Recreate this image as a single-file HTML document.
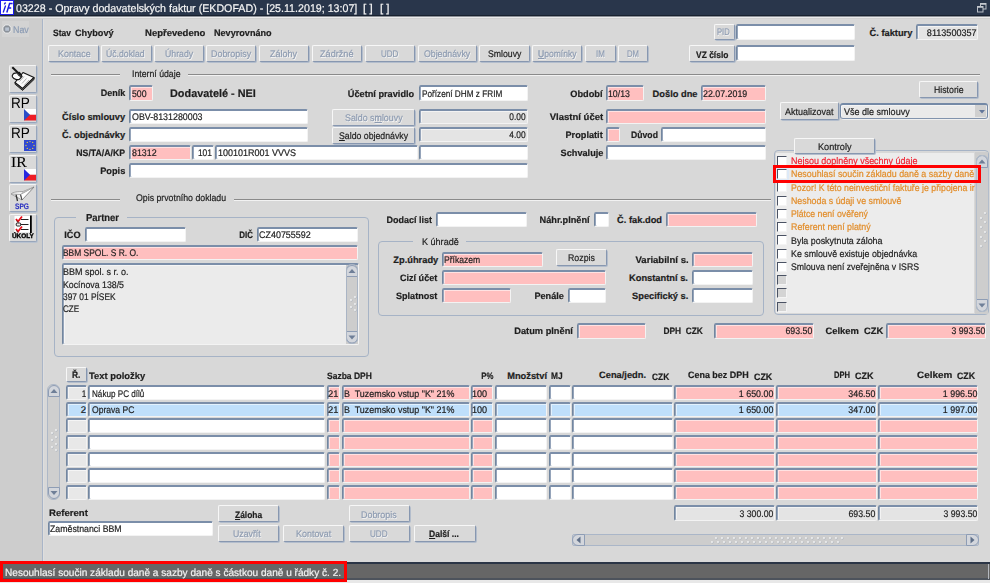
<!DOCTYPE html><html><head><meta charset="utf-8"><style>
*{margin:0;padding:0}
html,body{width:990px;height:583px;overflow:hidden;background:#d8d8d8}
body{position:relative;font-family:"Liberation Sans",sans-serif;color:#1e1e1e;text-rendering:geometricPrecision}
body>div,body>svg{position:absolute}
.t{white-space:nowrap;line-height:14px;height:14px;transform-origin:0 0;-webkit-text-stroke:0.2px currentColor}
.fld{box-sizing:border-box;border-top:2px solid #7b8ea9;border-left:1px solid #72869f;border-right:1px solid #f3f3f3;border-bottom:1px solid #f3f3f3;border-radius:2px;box-shadow:inset 1px 0 0 #95a4ba,inset 2px 1px 0 rgba(255,255,255,0.55)}
.btn{box-sizing:border-box;background:#d9d9d9;border-top:1px solid #f7f7f7;border-left:1px solid #f7f7f7;border-right:1px solid #8797b0;border-bottom:1px solid #8797b0;box-shadow:1px 1px 0 #b3bdcc;border-radius:2px}
.sep{height:1px;background:#8a8a8a;border-bottom:1px solid #f2f2f2}
.grp{box-sizing:border-box;border:1px solid #a6b3c6;border-radius:4px}
.cb{width:10px;height:10px;box-sizing:border-box;border-top:1.5px solid #4a5263;border-left:1.5px solid #4a5263;border-right:1px solid #f4f4f4;border-bottom:1px solid #f4f4f4}
.ibtn{width:28px;height:28px;box-sizing:border-box;background:#d9d9d9;border-top:1px solid #f4f4f4;border-left:1px solid #f4f4f4;border-right:1px solid #98a6bb;border-bottom:1px solid #98a6bb;box-shadow:1px 1px 0 #b8c2d0;border-radius:2px}
u{text-decoration:underline}
.dis{text-shadow:0.7px 0.7px 0 rgba(255,255,255,0.75)}
</style></head><body>
<div style="left:0px;top:0px;width:990px;height:15px;background:#29364b"></div>
<div style="left:0px;top:15px;width:990px;height:1px;background:#18212f"></div>
<div style="left:0px;top:16px;width:990px;height:1px;background:#8c9097"></div>
<div style="left:0px;top:17px;width:990px;height:1px;background:#ebebeb"></div>
<div style="left:0px;top:18px;width:990px;height:1px;background:#d0d0d0"></div>
<div style="left:0px;top:19px;width:42px;height:543px;background:#cdcdcd"></div>
<div style="left:42px;top:19px;width:1px;height:543px;background:#a9b5c8"></div>
<div style="left:43px;top:19px;width:1px;height:543px;background:#dedede"></div>
<div style="left:44px;top:19px;width:946px;height:543px;background:#d8d8d8"></div>
<div style="left:0px;top:0px;width:14px;height:15px;background:#fff;border:1px solid #1c1cf0;box-sizing:border-box"></div>
<svg style="left:1px;top:1px" width="12" height="13" viewBox="0 0 12 13"><path d="M4.6 1.5 L3.2 3.3" stroke="#1a1ae0" stroke-width="1.3"/><path d="M4.6 4.5 L2.2 11.5" stroke="#1a1ae0" stroke-width="1.3"/><path d="M5.8 11.5 L8.6 2.6 L11.6 2.6 M7.2 7 L10.2 7" stroke="#1a1ae0" stroke-width="1.5" fill="none"/></svg>
<div class="t" style="top:2.00px;font-size:11.2px;color:#f4f4f4;left:15.60px;transform:scaleX(0.9535);">03228 - Opravy dodavatelských faktur (EKDOFAD) - [25.11.2019; 13:07]</div>
<div class="t" style="top:2.00px;font-size:11.2px;color:#f4f4f4;left:363.30px;transform:scaleX(1.0444);">[ ]</div>
<div class="t" style="top:2.00px;font-size:11.2px;color:#f4f4f4;left:379.70px;transform:scaleX(1.0222);">[ ]</div>
<svg style="left:977px;top:3px" width="10" height="10" viewBox="0 0 10 10"><rect x="3.5" y="0.5" width="5.5" height="5.5" fill="none" stroke="#b9bec6" stroke-width="1"/><path d="M3.5 1 L9 1" stroke="#c8ccd2" stroke-width="1.5"/><rect x="0.5" y="3.5" width="5.5" height="5.5" fill="#29364b" stroke="#b9bec6" stroke-width="1"/><path d="M0.5 4 L6 4" stroke="#c8ccd2" stroke-width="1.5"/></svg>
<div style="left:0px;top:562px;width:990px;height:2px;background:#2b3546"></div>
<div style="left:0px;top:564px;width:990px;height:14px;background:#666666"></div>
<div style="left:0px;top:578px;width:990px;height:2px;background:#4d535c"></div>
<div style="left:988px;top:564px;width:1px;height:15px;background:#b4b8be"></div>
<div style="left:0px;top:580px;width:990px;height:3px;background:#e8e8e8"></div>
<div class="t" style="top:567.00px;font-size:10.4px;color:#f2f2f2;left:4.83px;transform:scaleX(0.9696);">Nesouhlasí součin základu daně a sazby daně s částkou daně u řádky č. 2.</div>
<div style="left:0px;top:561px;width:347px;height:21px;border:3px solid #ff0000;box-sizing:border-box"></div>
<div style="left:2px;top:21px;width:27px;height:16px;background:#d3d3d3"></div>
<svg style="left:2px;top:24px" width="10" height="10" viewBox="0 0 10 10"><circle cx="5" cy="5" r="4.2" fill="#8a9098" stroke="#eeeeee" stroke-width="1"/><rect x="3.2" y="3.4" width="3.8" height="3.4" fill="#b8c2d0"/></svg>
<div class="t" style="top:24.00px;font-size:9.8px;color:#8b9bb3;left:13.40px;transform:scaleX(0.9059);">Nav</div>
<div class="t" style="top:26.00px;font-size:9.3px;font-weight:bold;left:52.50px;transform:scaleX(0.9100);">Stav</div>
<div class="t" style="top:26.00px;font-size:9.3px;font-weight:bold;left:74.70px;transform:scaleX(0.9821);">Chybový</div>
<div class="t" style="top:26.00px;font-size:9.3px;font-weight:bold;left:144.50px;transform:scaleX(1.0254);">Nepřevedeno</div>
<div class="t" style="top:26.00px;font-size:9.3px;font-weight:bold;left:213.60px;transform:scaleX(0.9780);">Nevyrovnáno</div>
<div class="btn" style="left:48px;top:45px;width:51px;height:17px"></div>
<div class="t dis" style="top:48.00px;font-size:9.6px;color:#8d9bb1;left:57.70px;transform:scaleX(0.9286);">Kontace</div>
<div class="btn" style="left:101px;top:45px;width:51px;height:17px"></div>
<div class="t dis" style="top:48.00px;font-size:9.6px;color:#8d9bb1;left:106.20px;transform:scaleX(0.9048);">Úč.doklad</div>
<div class="btn" style="left:154px;top:45px;width:50px;height:17px"></div>
<div class="t dis" style="top:48.00px;font-size:9.6px;color:#8d9bb1;left:164.50px;transform:scaleX(0.9097);">Úhrady</div>
<div class="btn" style="left:206px;top:45px;width:50px;height:17px"></div>
<div class="t dis" style="top:48.00px;font-size:9.6px;color:#8d9bb1;left:210.50px;transform:scaleX(0.9279);">Dobropisy</div>
<div class="btn" style="left:259px;top:45px;width:50px;height:17px"></div>
<div class="t dis" style="top:48.00px;font-size:9.6px;color:#8d9bb1;left:270.00px;transform:scaleX(0.9414);">Zálohy</div>
<div class="btn" style="left:312px;top:45px;width:50px;height:17px"></div>
<div class="t dis" style="top:48.00px;font-size:9.6px;color:#8d9bb1;left:320.30px;transform:scaleX(0.9514);">Zádržné</div>
<div class="btn" style="left:365px;top:45px;width:50px;height:17px"></div>
<div class="t dis" style="top:48.00px;font-size:9.6px;color:#8d9bb1;left:381.40px;transform:scaleX(0.8381);">UDD</div>
<div class="btn" style="left:418px;top:45px;width:59px;height:17px"></div>
<div class="t dis" style="top:48.00px;font-size:9.6px;color:#8d9bb1;left:423.80px;transform:scaleX(0.9118);">Objednávky</div>
<div class="btn" style="left:479px;top:45px;width:51px;height:17px"></div>
<div class="t" style="top:48.00px;font-size:9.6px;left:487.70px;transform:scaleX(0.9081);">Smlouvy</div>
<div class="btn" style="left:532px;top:45px;width:50px;height:17px"></div>
<div class="t dis" style="top:48.00px;font-size:9.6px;color:#8d9bb1;left:537.60px;transform:scaleX(0.8930);"><u>U</u>pomínky</div>
<div class="btn" style="left:585px;top:45px;width:31px;height:17px"></div>
<div class="t dis" style="top:48.00px;font-size:9.6px;color:#8d9bb1;left:595.87px;transform:scaleX(0.8333);">IM</div>
<div class="btn" style="left:618px;top:45px;width:30px;height:17px"></div>
<div class="t dis" style="top:48.00px;font-size:9.6px;color:#8d9bb1;left:626.50px;transform:scaleX(0.8067);">DM</div>
<div class="btn" style="left:714px;top:24px;width:21px;height:16px"></div>
<div class="t dis" style="top:26.00px;font-size:9.6px;color:#8d9bb1;left:717.30px;transform:scaleX(0.7937);">PID</div>
<div class="fld" style="left:736px;top:24px;width:119px;height:16px;background:#fff"></div>
<div class="btn" style="left:689px;top:45px;width:46px;height:17px"></div>
<div class="t" style="top:48.00px;font-size:9.3px;font-weight:bold;left:695.50px;transform:scaleX(0.9083);">VZ číslo</div>
<div class="fld" style="left:736px;top:45px;width:119px;height:16px;background:#fff"></div>
<div class="t" style="top:26.00px;font-size:9.3px;font-weight:bold;left:869.50px;width:42.89px;text-align:right;">Č. faktury</div>
<div class="fld" style="left:916px;top:24px;width:62px;height:16px;background:#e4e4e4"></div>
<div class="t" style="top:27.00px;font-size:9.6px;left:924.16px;width:52.66px;text-align:right;transform:scaleX(0.9462);transform-origin:100% 0;">8113500357</div>
<div class="sep" style="left:51px;top:74px;width:69px"></div>
<div class="t" style="top:68.00px;font-size:9.6px;left:132.09px;transform:scaleX(0.9096);">Interní údaje</div>
<div class="sep" style="left:188px;top:74px;width:792px"></div>
<div class="t" style="top:86.00px;font-size:9.3px;font-weight:bold;left:99.52px;width:25.33px;text-align:right;transform:scaleX(0.9692);transform-origin:100% 0;">Deník</div>
<div class="fld" style="left:129px;top:85px;width:24px;height:16px;background:#ffbfbf"></div>
<div class="t" style="top:88.00px;font-size:9.6px;left:131.60px;transform:scaleX(0.9125);">500</div>
<div class="t" style="top:87.00px;font-size:11px;font-weight:bold;left:169.50px;transform:scaleX(0.9884);">Dodavatelé - NEI</div>
<div class="t" style="top:87.00px;font-size:9.3px;font-weight:bold;left:347.40px;width:67.17px;text-align:right;transform:scaleX(0.9881);transform-origin:100% 0;">Účetní pravidlo</div>
<div class="fld" style="left:419px;top:85px;width:109px;height:16px;background:#fff"></div>
<div class="t" style="top:88.00px;font-size:9.6px;left:421.70px;transform:scaleX(0.8559);">Pořízení DHM z FRIM</div>
<div class="t" style="top:87.00px;font-size:9.3px;font-weight:bold;left:570.00px;width:32.53px;text-align:right;transform:scaleX(0.9909);transform-origin:100% 0;">Období</div>
<div class="fld" style="left:606px;top:85px;width:38px;height:16px;background:#ffbfbf"></div>
<div class="t" style="top:88.00px;font-size:9.6px;left:607.59px;transform:scaleX(0.9130);">10/13</div>
<div class="t" style="top:87.00px;font-size:9.3px;font-weight:bold;left:652.60px;width:44.94px;text-align:right;">Došlo dne</div>
<div class="fld" style="left:701px;top:85px;width:65px;height:16px;background:#ffbfbf"></div>
<div class="t" style="top:88.00px;font-size:9.6px;left:702.70px;transform:scaleX(0.9208);">22.07.2019</div>
<div class="btn" style="left:919px;top:81px;width:59px;height:17px"></div>
<div class="t" style="top:84.00px;font-size:9.6px;left:933.80px;transform:scaleX(0.9094);">Historie</div>
<div class="t" style="top:110.00px;font-size:9.3px;font-weight:bold;left:62.10px;width:63.03px;text-align:right;">Číslo smlouvy</div>
<div class="fld" style="left:129px;top:109px;width:179px;height:15px;background:#fff"></div>
<div class="t" style="top:111.00px;font-size:9.6px;left:131.60px;transform:scaleX(0.9250);">OBV-8131280003</div>
<div class="btn" style="left:332px;top:109px;width:83px;height:17px"></div>
<div class="t dis" style="top:112.00px;font-size:9.6px;color:#8d9bb1;left:344.50px;transform:scaleX(0.9226);">Saldo s<u>m</u>louvy</div>
<div class="fld" style="left:419px;top:109px;width:109px;height:15px;background:#e4e4e4"></div>
<div class="t" style="top:111.00px;font-size:9.6px;left:506.94px;width:18.69px;text-align:right;transform:scaleX(0.8737);transform-origin:100% 0;">0.00</div>
<div class="t" style="top:110.00px;font-size:9.3px;font-weight:bold;left:551.00px;width:52.19px;text-align:right;transform:scaleX(1.0250);transform-origin:100% 0;">Vlastní účet</div>
<div class="fld" style="left:606px;top:109px;width:160px;height:15px;background:#ffbfbf"></div>
<div class="btn" style="left:780px;top:102px;width:59px;height:18px"></div>
<div class="t" style="top:106.00px;font-size:9.6px;left:785.10px;transform:scaleX(0.9365);">Aktualizovat</div>
<div style="left:840px;top:102.5px;width:148px;height:16px;background:#eaeaea;border:1px solid #7489a6;border-top-width:2px;border-bottom-color:#8193ad;border-radius:3px;box-sizing:border-box;box-shadow:inset 1px 1px 0 #f4f4f4,1px 1px 0 #f0f0f0"></div>
<div class="t" style="top:106.00px;font-size:9.6px;left:843.80px;transform:scaleX(0.9400);">Vše dle smlouvy</div>
<div style="left:975px;top:104.5px;width:11px;height:12.5px;background:#d0d0d0"></div>
<svg style="left:978.5px;top:109.5px" width="6" height="4" viewBox="0 0 6 4"><path d="M0 0 L6 0 L3 3.5 Z" fill="#62769a"/></svg>
<div class="t" style="top:128.00px;font-size:9.3px;font-weight:bold;left:62.10px;width:63.03px;text-align:right;">Č. objednávky</div>
<div class="fld" style="left:129px;top:127px;width:179px;height:15px;background:#fff"></div>
<div class="btn" style="left:332px;top:127px;width:83px;height:17px"></div>
<div class="t" style="top:130.00px;font-size:9.6px;left:338.50px;transform:scaleX(0.9118);"><u>S</u>aldo objednávky</div>
<div class="fld" style="left:419px;top:127px;width:109px;height:15px;background:#e4e4e4"></div>
<div class="t" style="top:129.00px;font-size:9.6px;left:506.94px;width:18.69px;text-align:right;transform:scaleX(0.8737);transform-origin:100% 0;">4.00</div>
<div class="t" style="top:128.00px;font-size:9.3px;font-weight:bold;left:565.00px;width:37.72px;text-align:right;transform:scaleX(0.9868);transform-origin:100% 0;">Proplatit</div>
<div class="fld" style="left:606px;top:127px;width:14px;height:15px;background:#ffbfbf"></div>
<div class="t" style="top:128.00px;font-size:9.3px;font-weight:bold;left:629.01px;width:28.92px;text-align:right;transform:scaleX(0.9310);transform-origin:100% 0;">Důvod</div>
<div class="fld" style="left:661px;top:127px;width:105px;height:15px;background:#fff"></div>
<div class="t" style="top:146.00px;font-size:9.3px;font-weight:bold;left:73.10px;width:52.00px;text-align:right;transform:scaleX(0.9365);transform-origin:100% 0;">NS/TA/A/KP</div>
<div class="fld" style="left:129px;top:145px;width:62px;height:15px;background:#ffbfbf"></div>
<div class="t" style="top:147.00px;font-size:9.6px;left:131.70px;transform:scaleX(0.9231);">81312</div>
<div class="fld" style="left:192px;top:145px;width:22px;height:15px;background:#fff"></div>
<div class="t" style="top:147.00px;font-size:9.6px;left:195.90px;width:16.02px;text-align:right;transform:scaleX(0.8800);transform-origin:100% 0;">101</div>
<div class="fld" style="left:215px;top:145px;width:203px;height:15px;background:#fff"></div>
<div class="t" style="top:147.00px;font-size:9.6px;left:217.96px;transform:scaleX(0.9366);">100101R001 VVVS</div>
<div class="fld" style="left:419px;top:145px;width:109px;height:15px;background:#fff"></div>
<div class="t" style="top:146.00px;font-size:9.3px;font-weight:bold;left:559.99px;width:43.42px;text-align:right;transform:scaleX(0.9860);transform-origin:100% 0;">Schvaluje</div>
<div class="fld" style="left:606px;top:145px;width:160px;height:15px;background:#fff"></div>
<div class="t" style="top:164.00px;font-size:9.3px;font-weight:bold;left:100.30px;width:25.31px;text-align:right;transform:scaleX(0.9920);transform-origin:100% 0;">Popis</div>
<div class="fld" style="left:129px;top:163px;width:399px;height:15px;background:#fff"></div>
<div class="grp" style="left:774px;top:150px;width:215px;height:165px"></div>
<div style="left:775.5px;top:153px;width:198.5px;height:160px;background:#ececec"></div>
<div style="left:975px;top:152px;width:13px;height:162px;background:#cdcdcd"></div>
<div class="btn" style="left:794px;top:138px;width:81px;height:16px"></div>
<div class="t" style="top:141.00px;font-size:9.6px;left:817.80px;transform:scaleX(0.9514);">Kontroly</div>
<div class="cb" style="left:777px;top:155.80px;background:#ffffff"></div>
<div class="t" style="top:155.00px;font-size:9.6px;color:#f02232;left:790.70px;transform:scaleX(0.9333);">Nejsou doplněny všechny údaje</div>
<div style="left:776px;top:167.25px;width:13px;height:12.5px;background:#dde9f7"></div>
<div class="cb" style="left:777px;top:169.05px;background:#ffffff"></div>
<div class="t" style="top:168.00px;font-size:9.6px;color:#e28d2a;left:790.70px;transform:scaleX(0.9258);width:198.22px;overflow:hidden;">Nesouhlasí součin základu daně a sazby daně s částkou daně</div>
<div class="cb" style="left:777px;top:182.30px;background:#ffffff"></div>
<div class="t" style="top:182.00px;font-size:9.6px;color:#e28d2a;left:790.70px;transform:scaleX(0.9135);width:200.88px;overflow:hidden;">Pozor! K této neinvestiční faktuře je připojena investiční</div>
<div class="cb" style="left:777px;top:195.55px;background:#ffffff"></div>
<div class="t" style="top:195.00px;font-size:9.6px;color:#e28d2a;left:790.70px;transform:scaleX(0.9200);">Neshoda s údaji ve smlouvě</div>
<div class="cb" style="left:777px;top:208.80px;background:#ffffff"></div>
<div class="t" style="top:208.00px;font-size:9.6px;color:#e28d2a;left:790.70px;transform:scaleX(0.9071);">Plátce není ověřený</div>
<div class="cb" style="left:777px;top:222.05px;background:#ffffff"></div>
<div class="t" style="top:221.00px;font-size:9.6px;color:#e28d2a;left:790.70px;transform:scaleX(0.9221);">Referent není platný</div>
<div class="cb" style="left:777px;top:235.30px;background:#ffffff"></div>
<div class="t" style="top:235.00px;font-size:9.6px;left:790.70px;transform:scaleX(0.9273);">Byla poskytnuta záloha</div>
<div class="cb" style="left:777px;top:248.55px;background:#ffffff"></div>
<div class="t" style="top:248.00px;font-size:9.6px;left:790.70px;transform:scaleX(0.9197);">Ke smlouvě existuje objednávka</div>
<div class="cb" style="left:777px;top:261.80px;background:#ffffff"></div>
<div class="t" style="top:261.00px;font-size:9.6px;left:790.70px;transform:scaleX(0.9092);">Smlouva není zveřejněna v ISRS</div>
<div class="cb" style="left:777px;top:275.05px;background:#d4d4d4"></div>
<div class="cb" style="left:777px;top:288.30px;background:#d4d4d4"></div>
<div class="cb" style="left:777px;top:301.55px;background:#d4d4d4"></div>
<svg style="left:976px;top:155px" width="12" height="13" viewBox="0 0 12 13"><path d="M0.5 12.5 L0.5 6 A5.5 5.5 0 0 1 11.5 6 L11.5 12.5 Z" fill="#d3d6dc" stroke="#8e9db5" stroke-width="1"/><path d="M2.5 8.5 L9.5 8.5 L6 4.5 Z" fill="#6f7f98"/></svg>
<svg style="left:976px;top:299px" width="12" height="13" viewBox="0 0 12 13"><path d="M0.5 0.5 L0.5 7 A5.5 5.5 0 0 0 11.5 7 L11.5 0.5 Z" fill="#d3d6dc" stroke="#8e9db5" stroke-width="1"/><path d="M2.5 4.5 L9.5 4.5 L6 8.5 Z" fill="#6f7f98"/></svg>
<div style="left:975.5px;top:155px;width:13px;height:157px;border:1px solid #b3bdcb;border-radius:6px;box-sizing:border-box"></div>
<div style="left:984px;top:212px;width:2px;height:2px;background:#f2f2f2;border-radius:1px;box-shadow:0.5px 0.5px 0 #a8b0bc"></div>
<div style="left:980px;top:217px;width:2px;height:2px;background:#f2f2f2;border-radius:1px;box-shadow:0.5px 0.5px 0 #a8b0bc"></div>
<div style="left:984px;top:221px;width:2px;height:2px;background:#f2f2f2;border-radius:1px;box-shadow:0.5px 0.5px 0 #a8b0bc"></div>
<div style="left:980px;top:226px;width:2px;height:2px;background:#f2f2f2;border-radius:1px;box-shadow:0.5px 0.5px 0 #a8b0bc"></div>
<div style="left:984px;top:231px;width:2px;height:2px;background:#f2f2f2;border-radius:1px;box-shadow:0.5px 0.5px 0 #a8b0bc"></div>
<div style="left:980px;top:236px;width:2px;height:2px;background:#f2f2f2;border-radius:1px;box-shadow:0.5px 0.5px 0 #a8b0bc"></div>
<div style="left:984px;top:240px;width:2px;height:2px;background:#f2f2f2;border-radius:1px;box-shadow:0.5px 0.5px 0 #a8b0bc"></div>
<div style="left:980px;top:245px;width:2px;height:2px;background:#f2f2f2;border-radius:1px;box-shadow:0.5px 0.5px 0 #a8b0bc"></div>
<div style="left:773px;top:165px;width:208px;height:18px;border:3px solid #ff0000;box-sizing:border-box"></div>
<div class="sep" style="left:51px;top:199px;width:69px"></div>
<div class="t" style="top:192.00px;font-size:9.6px;left:136.00px;transform:scaleX(0.9133);">Opis prvotního dokladu</div>
<div class="sep" style="left:233.5px;top:199px;width:537.5px"></div>
<div class="grp" style="left:53.5px;top:217px;width:315px;height:140px"></div>
<div style="left:76px;top:214px;width:51px;height:6px;background:#d8d8d8"></div>
<div class="t" style="top:212.00px;font-size:10.2px;font-weight:bold;left:85.50px;transform:scaleX(0.9250);">Partner</div>
<div class="t" style="top:228.00px;font-size:9.3px;font-weight:bold;left:64.39px;width:16.53px;text-align:right;transform:scaleX(0.9875);transform-origin:100% 0;">IČO</div>
<div class="fld" style="left:85px;top:227px;width:101px;height:15px;background:#fff"></div>
<div class="t" style="top:228.00px;font-size:9.3px;font-weight:bold;left:237.30px;width:16.02px;text-align:right;transform:scaleX(0.8562);transform-origin:100% 0;">DIČ</div>
<div class="fld" style="left:257px;top:227px;width:101px;height:15px;background:#fff"></div>
<div class="t" style="top:229.00px;font-size:9.6px;left:258.80px;transform:scaleX(0.9327);">CZ40755592</div>
<div class="fld" style="left:62px;top:245px;width:296px;height:15px;background:#ffbfbf"></div>
<div class="t" style="top:247.00px;font-size:9.6px;left:63.40px;transform:scaleX(0.8788);">BBM SPOL. S R. O.</div>
<div class="fld" style="left:62px;top:263px;width:297px;height:82px;background:#ebebeb"></div>
<div class="t" style="top:266.00px;font-size:9.6px;left:63.40px;transform:scaleX(0.9377);">BBM spol. s r. o.</div>
<div class="t" style="top:279.00px;font-size:9.6px;left:63.40px;transform:scaleX(0.9149);">Kocínova 138/5</div>
<div class="t" style="top:291.00px;font-size:9.6px;left:63.40px;transform:scaleX(0.8733);">397 01 PÍSEK</div>
<div class="t" style="top:303.00px;font-size:9.6px;left:63.40px;transform:scaleX(0.8474);">CZE</div>
<div style="left:346px;top:265px;width:12px;height:79px;background:#cdcdcd"></div>
<svg style="left:346px;top:265px" width="12" height="12" viewBox="0 0 12 12"><path d="M0.5 11.5 L0.5 5.5 A5.5 5 0 0 1 11.5 5.5 L11.5 11.5 Z" fill="#d3d6dc" stroke="#8e9db5" stroke-width="1"/><path d="M2.5 8 L9.5 8 L6 4 Z" fill="#6f7f98"/></svg>
<svg style="left:346px;top:331px" width="12" height="13" viewBox="0 0 12 13"><path d="M0.5 0.5 L0.5 7 A5.5 5 0 0 0 11.5 7 L11.5 0.5 Z" fill="#d3d6dc" stroke="#8e9db5" stroke-width="1"/><path d="M2.5 4.5 L9.5 4.5 L6 8.5 Z" fill="#6f7f98"/></svg>
<div style="left:346px;top:264px;width:12px;height:80px;border:1px solid #a9b4c4;border-radius:5px;box-sizing:border-box"></div>
<div style="left:354px;top:296px;width:2px;height:2px;background:#f2f2f2;border-radius:1px;box-shadow:0.5px 0.5px 0 #a8b0bc"></div>
<div style="left:350px;top:299px;width:2px;height:2px;background:#f2f2f2;border-radius:1px;box-shadow:0.5px 0.5px 0 #a8b0bc"></div>
<div style="left:354px;top:303px;width:2px;height:2px;background:#f2f2f2;border-radius:1px;box-shadow:0.5px 0.5px 0 #a8b0bc"></div>
<div style="left:350px;top:306px;width:2px;height:2px;background:#f2f2f2;border-radius:1px;box-shadow:0.5px 0.5px 0 #a8b0bc"></div>
<div style="left:354px;top:309px;width:2px;height:2px;background:#f2f2f2;border-radius:1px;box-shadow:0.5px 0.5px 0 #a8b0bc"></div>
<div class="t" style="top:213.00px;font-size:9.3px;font-weight:bold;left:384.60px;width:47.02px;text-align:right;transform:scaleX(0.9660);transform-origin:100% 0;">Dodací list</div>
<div class="fld" style="left:436px;top:212px;width:91px;height:15px;background:#fff"></div>
<div class="t" style="top:213.00px;font-size:9.3px;font-weight:bold;left:539.10px;width:50.62px;text-align:right;transform:scaleX(0.9882);transform-origin:100% 0;">Náhr.plnění</div>
<div class="fld" style="left:594px;top:212px;width:15px;height:15px;background:#fff"></div>
<div class="t" style="top:213.00px;font-size:9.3px;font-weight:bold;left:617.10px;width:44.94px;text-align:right;">Č. fak.dod</div>
<div class="fld" style="left:666px;top:212px;width:91px;height:15px;background:#ffbfbf"></div>
<div class="grp" style="left:378px;top:241px;width:386px;height:75px"></div>
<div style="left:413px;top:238px;width:53px;height:6px;background:#d8d8d8"></div>
<div class="t" style="top:236.00px;font-size:9.6px;left:421.50px;transform:scaleX(0.9436);">K úhradě</div>
<div class="t" style="top:253.00px;font-size:9.3px;font-weight:bold;left:393.30px;width:44.94px;text-align:right;">Zp.úhrady</div>
<div class="fld" style="left:442px;top:252px;width:101px;height:15px;background:#ffbfbf"></div>
<div class="t" style="top:254.00px;font-size:9.6px;left:444.30px;transform:scaleX(0.8950);">Příkazem</div>
<div class="btn" style="left:556px;top:249px;width:51px;height:17px"></div>
<div class="t" style="top:252.00px;font-size:9.6px;left:567.60px;transform:scaleX(0.9172);">Rozpis</div>
<div class="t" style="top:253.00px;font-size:9.3px;font-weight:bold;left:637.02px;width:51.69px;text-align:right;transform:scaleX(1.0294);transform-origin:100% 0;">Variabilní s.</div>
<div class="fld" style="left:692px;top:252px;width:61px;height:15px;background:#ffbfbf"></div>
<div class="t" style="top:271.00px;font-size:9.3px;font-weight:bold;left:399.32px;width:38.23px;text-align:right;transform:scaleX(0.9744);transform-origin:100% 0;">Cizí účet</div>
<div class="fld" style="left:442px;top:270px;width:164px;height:15px;background:#ffbfbf"></div>
<div class="t" style="top:271.00px;font-size:9.3px;font-weight:bold;left:629.00px;width:58.89px;text-align:right;">Konstantní s.</div>
<div class="fld" style="left:692px;top:270px;width:61px;height:15px;background:#fff"></div>
<div class="t" style="top:289.00px;font-size:9.3px;font-weight:bold;left:395.31px;width:42.36px;text-align:right;transform:scaleX(0.9767);transform-origin:100% 0;">Splatnost</div>
<div class="fld" style="left:442px;top:288px;width:69px;height:15px;background:#ffbfbf"></div>
<div class="t" style="top:289.00px;font-size:9.3px;font-weight:bold;left:534.00px;width:29.98px;text-align:right;transform:scaleX(0.9867);transform-origin:100% 0;">Penále</div>
<div class="fld" style="left:568px;top:288px;width:38px;height:15px;background:#fff"></div>
<div class="t" style="top:289.00px;font-size:9.3px;font-weight:bold;left:632.00px;width:56.34px;text-align:right;">Specifický s.</div>
<div class="fld" style="left:692px;top:288px;width:61px;height:15px;background:#fff"></div>
<div class="t" style="top:324.00px;font-size:9.3px;font-weight:bold;left:513.70px;width:58.89px;text-align:right;transform:scaleX(0.9949);transform-origin:100% 0;">Datum plnění</div>
<div class="fld" style="left:577px;top:323px;width:69px;height:16px;background:#ffbfbf"></div>
<div class="t" style="top:324.00px;font-size:9.3px;font-weight:bold;left:659.21px;width:43.91px;text-align:right;transform:scaleX(0.9000);transform-origin:100% 0;">DPH&nbsp; CZK</div>
<div class="fld" style="left:714px;top:323px;width:100px;height:16px;background:#ffbfbf"></div>
<div class="t" style="top:325.00px;font-size:9.6px;left:783.47px;width:29.34px;text-align:right;transform:scaleX(0.9172);transform-origin:100% 0;">693.50</div>
<div class="t" style="top:324.00px;font-size:9.3px;font-weight:bold;left:825.80px;width:57.36px;text-align:right;transform:scaleX(1.0105);transform-origin:100% 0;">Celkem&nbsp; CZK</div>
<div class="fld" style="left:886px;top:323px;width:100px;height:16px;background:#ffbfbf"></div>
<div class="t" style="top:325.00px;font-size:9.6px;left:947.67px;width:37.36px;text-align:right;transform:scaleX(0.9054);transform-origin:100% 0;">3 993.50</div>
<div class="btn" style="left:66px;top:367px;width:21px;height:15px"></div>
<div class="t" style="top:368.00px;font-size:9.3px;font-weight:bold;left:72.30px;transform:scaleX(0.9000);">Ř.</div>
<div class="t" style="top:369.00px;font-size:9.3px;font-weight:bold;left:89.30px;transform:scaleX(1.0107);">Text položky</div>
<div class="t" style="top:369.00px;font-size:9.3px;font-weight:bold;left:326.90px;transform:scaleX(0.9143);">Sazba DPH</div>
<div class="t" style="top:369.00px;font-size:9.3px;font-weight:bold;left:479.08px;width:14.47px;text-align:right;transform:scaleX(0.8400);transform-origin:100% 0;">P%</div>
<div class="t" style="top:369.00px;font-size:9.3px;font-weight:bold;left:507.20px;">Množství</div>
<div class="t" style="top:369.00px;font-size:9.3px;font-weight:bold;left:551.00px;transform:scaleX(0.9000);">MJ</div>
<div class="t" style="top:368.00px;font-size:9.3px;font-weight:bold;left:599.00px;">Cena/jedn.</div>
<div class="t" style="top:370.00px;font-size:9.3px;font-weight:bold;left:651.60px;transform:scaleX(0.9053);">CZK</div>
<div class="t" style="top:368.00px;font-size:9.3px;font-weight:bold;left:687.80px;transform:scaleX(0.9619);">Cena bez DPH</div>
<div class="t" style="top:370.00px;font-size:9.3px;font-weight:bold;left:753.80px;transform:scaleX(0.9579);">CZK</div>
<div class="t" style="top:368.00px;font-size:9.3px;font-weight:bold;left:833.70px;transform:scaleX(0.8150);">DPH</div>
<div class="t" style="top:369.00px;font-size:9.3px;font-weight:bold;left:855.20px;transform:scaleX(0.9684);">CZK</div>
<div class="t" style="top:368.00px;font-size:9.3px;font-weight:bold;left:917.00px;transform:scaleX(1.0667);">Celkem</div>
<div class="t" style="top:369.00px;font-size:9.3px;font-weight:bold;left:957.40px;transform:scaleX(0.9474);">CZK</div>
<div class="fld" style="left:66px;top:385px;width:21px;height:15px;background:#e8e8e8"></div>
<div class="fld" style="left:88px;top:385px;width:237px;height:15px;background:#ffffff"></div>
<div class="fld" style="left:327px;top:385px;width:13px;height:15px;background:#ffbfbf"></div>
<div class="fld" style="left:342px;top:385px;width:128px;height:15px;background:#ffbfbf"></div>
<div class="fld" style="left:471px;top:385px;width:22px;height:15px;background:#ffbfbf"></div>
<div class="fld" style="left:495px;top:385px;width:52px;height:15px;background:#ffffff"></div>
<div class="fld" style="left:549px;top:385px;width:22px;height:15px;background:#ffffff"></div>
<div class="fld" style="left:572px;top:385px;width:101px;height:15px;background:#ffffff"></div>
<div class="fld" style="left:674px;top:385px;width:101px;height:15px;background:#ffbfbf"></div>
<div class="fld" style="left:776px;top:385px;width:101px;height:15px;background:#ffbfbf"></div>
<div class="fld" style="left:878px;top:385px;width:100px;height:15px;background:#ffbfbf"></div>
<div class="fld" style="left:66px;top:402px;width:21px;height:15px;background:#bfdffb"></div>
<div class="fld" style="left:88px;top:402px;width:237px;height:15px;background:#bfdffb"></div>
<div class="fld" style="left:327px;top:402px;width:13px;height:15px;background:#bfdffb"></div>
<div class="fld" style="left:342px;top:402px;width:128px;height:15px;background:#bfdffb"></div>
<div class="fld" style="left:471px;top:402px;width:22px;height:15px;background:#bfdffb"></div>
<div class="fld" style="left:495px;top:402px;width:52px;height:15px;background:#bfdffb"></div>
<div class="fld" style="left:549px;top:402px;width:22px;height:15px;background:#bfdffb"></div>
<div class="fld" style="left:572px;top:402px;width:101px;height:15px;background:#bfdffb"></div>
<div class="fld" style="left:674px;top:402px;width:101px;height:15px;background:#bfdffb"></div>
<div class="fld" style="left:776px;top:402px;width:101px;height:15px;background:#bfdffb"></div>
<div class="fld" style="left:878px;top:402px;width:100px;height:15px;background:#bfdffb"></div>
<div class="fld" style="left:66px;top:418px;width:21px;height:15px;background:#e8e8e8"></div>
<div class="fld" style="left:88px;top:418px;width:237px;height:15px;background:#ffffff"></div>
<div class="fld" style="left:327px;top:418px;width:13px;height:15px;background:#ffbfbf"></div>
<div class="fld" style="left:342px;top:418px;width:128px;height:15px;background:#ffbfbf"></div>
<div class="fld" style="left:471px;top:418px;width:22px;height:15px;background:#ffbfbf"></div>
<div class="fld" style="left:495px;top:418px;width:52px;height:15px;background:#ffffff"></div>
<div class="fld" style="left:549px;top:418px;width:22px;height:15px;background:#ffffff"></div>
<div class="fld" style="left:572px;top:418px;width:101px;height:15px;background:#ffffff"></div>
<div class="fld" style="left:674px;top:418px;width:101px;height:15px;background:#ffbfbf"></div>
<div class="fld" style="left:776px;top:418px;width:101px;height:15px;background:#ffbfbf"></div>
<div class="fld" style="left:878px;top:418px;width:100px;height:15px;background:#ffbfbf"></div>
<div class="fld" style="left:66px;top:435px;width:21px;height:15px;background:#e8e8e8"></div>
<div class="fld" style="left:88px;top:435px;width:237px;height:15px;background:#ffffff"></div>
<div class="fld" style="left:327px;top:435px;width:13px;height:15px;background:#ffbfbf"></div>
<div class="fld" style="left:342px;top:435px;width:128px;height:15px;background:#ffbfbf"></div>
<div class="fld" style="left:471px;top:435px;width:22px;height:15px;background:#ffbfbf"></div>
<div class="fld" style="left:495px;top:435px;width:52px;height:15px;background:#ffffff"></div>
<div class="fld" style="left:549px;top:435px;width:22px;height:15px;background:#ffffff"></div>
<div class="fld" style="left:572px;top:435px;width:101px;height:15px;background:#ffffff"></div>
<div class="fld" style="left:674px;top:435px;width:101px;height:15px;background:#ffbfbf"></div>
<div class="fld" style="left:776px;top:435px;width:101px;height:15px;background:#ffbfbf"></div>
<div class="fld" style="left:878px;top:435px;width:100px;height:15px;background:#ffbfbf"></div>
<div class="fld" style="left:66px;top:452px;width:21px;height:15px;background:#e8e8e8"></div>
<div class="fld" style="left:88px;top:452px;width:237px;height:15px;background:#ffffff"></div>
<div class="fld" style="left:327px;top:452px;width:13px;height:15px;background:#ffbfbf"></div>
<div class="fld" style="left:342px;top:452px;width:128px;height:15px;background:#ffbfbf"></div>
<div class="fld" style="left:471px;top:452px;width:22px;height:15px;background:#ffbfbf"></div>
<div class="fld" style="left:495px;top:452px;width:52px;height:15px;background:#ffffff"></div>
<div class="fld" style="left:549px;top:452px;width:22px;height:15px;background:#ffffff"></div>
<div class="fld" style="left:572px;top:452px;width:101px;height:15px;background:#ffffff"></div>
<div class="fld" style="left:674px;top:452px;width:101px;height:15px;background:#ffbfbf"></div>
<div class="fld" style="left:776px;top:452px;width:101px;height:15px;background:#ffbfbf"></div>
<div class="fld" style="left:878px;top:452px;width:100px;height:15px;background:#ffbfbf"></div>
<div class="fld" style="left:66px;top:468px;width:21px;height:15px;background:#e8e8e8"></div>
<div class="fld" style="left:88px;top:468px;width:237px;height:15px;background:#ffffff"></div>
<div class="fld" style="left:327px;top:468px;width:13px;height:15px;background:#ffbfbf"></div>
<div class="fld" style="left:342px;top:468px;width:128px;height:15px;background:#ffbfbf"></div>
<div class="fld" style="left:471px;top:468px;width:22px;height:15px;background:#ffbfbf"></div>
<div class="fld" style="left:495px;top:468px;width:52px;height:15px;background:#ffffff"></div>
<div class="fld" style="left:549px;top:468px;width:22px;height:15px;background:#ffffff"></div>
<div class="fld" style="left:572px;top:468px;width:101px;height:15px;background:#ffffff"></div>
<div class="fld" style="left:674px;top:468px;width:101px;height:15px;background:#ffbfbf"></div>
<div class="fld" style="left:776px;top:468px;width:101px;height:15px;background:#ffbfbf"></div>
<div class="fld" style="left:878px;top:468px;width:100px;height:15px;background:#ffbfbf"></div>
<div class="fld" style="left:66px;top:485px;width:21px;height:15px;background:#e8e8e8"></div>
<div class="fld" style="left:88px;top:485px;width:237px;height:15px;background:#ffffff"></div>
<div class="fld" style="left:327px;top:485px;width:13px;height:15px;background:#ffbfbf"></div>
<div class="fld" style="left:342px;top:485px;width:128px;height:15px;background:#ffbfbf"></div>
<div class="fld" style="left:471px;top:485px;width:22px;height:15px;background:#ffbfbf"></div>
<div class="fld" style="left:495px;top:485px;width:52px;height:15px;background:#ffffff"></div>
<div class="fld" style="left:549px;top:485px;width:22px;height:15px;background:#ffffff"></div>
<div class="fld" style="left:572px;top:485px;width:101px;height:15px;background:#ffffff"></div>
<div class="fld" style="left:674px;top:485px;width:101px;height:15px;background:#ffbfbf"></div>
<div class="fld" style="left:776px;top:485px;width:101px;height:15px;background:#ffbfbf"></div>
<div class="fld" style="left:878px;top:485px;width:100px;height:15px;background:#ffbfbf"></div>
<div class="t" style="top:388.00px;font-size:9.6px;left:80.65px;width:5.34px;text-align:right;transform:scaleX(0.8500);transform-origin:100% 0;">1</div>
<div class="t" style="top:388.00px;font-size:9.6px;left:91.70px;transform:scaleX(0.8468);">Nákup PC dílů</div>
<div class="t" style="top:388.00px;font-size:9.6px;left:328.30px;transform:scaleX(0.9700);">21</div>
<div class="t" style="top:388.00px;font-size:9.6px;left:344.00px;transform:scaleX(0.9286);">B&nbsp; Tuzemsko vstup "K" 21%</div>
<div class="t" style="top:388.00px;font-size:9.6px;left:472.35px;transform:scaleX(0.9467);">100</div>
<div class="t" style="top:388.00px;font-size:9.6px;left:735.97px;width:37.36px;text-align:right;transform:scaleX(0.9250);transform-origin:100% 0;">1 650.00</div>
<div class="t" style="top:388.00px;font-size:9.6px;left:845.97px;width:29.34px;text-align:right;transform:scaleX(0.9207);transform-origin:100% 0;">346.50</div>
<div class="t" style="top:388.00px;font-size:9.6px;left:939.57px;width:37.36px;text-align:right;transform:scaleX(0.9250);transform-origin:100% 0;">1 996.50</div>
<div class="t" style="top:404.00px;font-size:9.6px;left:80.70px;width:5.34px;text-align:right;">2</div>
<div class="t" style="top:404.00px;font-size:9.6px;left:91.70px;transform:scaleX(0.8936);">Oprava PC</div>
<div class="t" style="top:404.00px;font-size:9.6px;left:328.30px;transform:scaleX(0.9700);">21</div>
<div class="t" style="top:404.00px;font-size:9.6px;left:344.00px;transform:scaleX(0.9286);">B&nbsp; Tuzemsko vstup "K" 21%</div>
<div class="t" style="top:404.00px;font-size:9.6px;left:472.35px;transform:scaleX(0.9467);">100</div>
<div class="t" style="top:404.00px;font-size:9.6px;left:735.97px;width:37.36px;text-align:right;transform:scaleX(0.9250);transform-origin:100% 0;">1 650.00</div>
<div class="t" style="top:404.00px;font-size:9.6px;left:845.97px;width:29.34px;text-align:right;transform:scaleX(0.9207);transform-origin:100% 0;">347.00</div>
<div class="t" style="top:404.00px;font-size:9.6px;left:939.57px;width:37.36px;text-align:right;transform:scaleX(0.9250);transform-origin:100% 0;">1 997.00</div>
<div style="left:47px;top:384px;width:13px;height:116px;background:#cfcfcf;border:1px solid #aeb8c7;border-radius:6px;box-sizing:border-box"></div>
<svg style="left:47.5px;top:384.5px" width="12" height="12" viewBox="0 0 12 12"><path d="M0.5 11.5 L0.5 6 A5.5 5.5 0 0 1 11.5 6 L11.5 11.5 Z" fill="#d3d6dc" stroke="#8e9db5" stroke-width="1"/><path d="M2.5 8 L9.5 8 L6 4 Z" fill="#6f7f98"/></svg>
<svg style="left:47.5px;top:487px" width="12" height="12" viewBox="0 0 12 12"><path d="M0.5 0.5 L0.5 6 A5.5 5.5 0 0 0 11.5 6 L11.5 0.5 Z" fill="#d3d6dc" stroke="#8e9db5" stroke-width="1"/><path d="M2.5 4 L9.5 4 L6 8 Z" fill="#6f7f98"/></svg>
<div style="left:55px;top:429px;width:2px;height:2px;background:#f2f2f2;border-radius:1px;box-shadow:0.5px 0.5px 0 #a8b0bc"></div>
<div style="left:51px;top:432px;width:2px;height:2px;background:#f2f2f2;border-radius:1px;box-shadow:0.5px 0.5px 0 #a8b0bc"></div>
<div style="left:55px;top:436px;width:2px;height:2px;background:#f2f2f2;border-radius:1px;box-shadow:0.5px 0.5px 0 #a8b0bc"></div>
<div style="left:51px;top:439px;width:2px;height:2px;background:#f2f2f2;border-radius:1px;box-shadow:0.5px 0.5px 0 #a8b0bc"></div>
<div style="left:55px;top:443px;width:2px;height:2px;background:#f2f2f2;border-radius:1px;box-shadow:0.5px 0.5px 0 #a8b0bc"></div>
<div style="left:51px;top:446px;width:2px;height:2px;background:#f2f2f2;border-radius:1px;box-shadow:0.5px 0.5px 0 #a8b0bc"></div>
<div style="left:55px;top:449px;width:2px;height:2px;background:#f2f2f2;border-radius:1px;box-shadow:0.5px 0.5px 0 #a8b0bc"></div>
<div class="t" style="top:506.00px;font-size:9.3px;font-weight:bold;left:49.40px;transform:scaleX(1.0316);">Referent</div>
<div class="fld" style="left:48px;top:521px;width:165px;height:15px;background:#fff"></div>
<div class="t" style="top:523.00px;font-size:9.6px;left:50.00px;transform:scaleX(0.9141);">Zaměstnanci BBM</div>
<div class="btn" style="left:218px;top:505px;width:61px;height:17px"></div>
<div class="t" style="top:508.00px;font-size:9.3px;font-weight:bold;left:234.50px;transform:scaleX(0.9067);"><u>Z</u>áloha</div>
<div class="btn" style="left:349px;top:505px;width:61px;height:17px"></div>
<div class="t dis" style="top:509.00px;font-size:9.6px;color:#8d9bb1;left:361.20px;transform:scaleX(0.9289);">Dobropis</div>
<div class="btn" style="left:218px;top:525px;width:61px;height:17px"></div>
<div class="t dis" style="top:528.00px;font-size:9.6px;color:#8d9bb1;left:233.40px;transform:scaleX(0.9129);">Uzavřít</div>
<div class="btn" style="left:283px;top:525px;width:61px;height:17px"></div>
<div class="t dis" style="top:528.00px;font-size:9.6px;color:#8d9bb1;left:295.60px;transform:scaleX(0.9316);">Kontovat</div>
<div class="btn" style="left:349px;top:525px;width:61px;height:17px"></div>
<div class="t dis" style="top:528.00px;font-size:9.6px;color:#8d9bb1;left:370.20px;transform:scaleX(0.8476);">UDD</div>
<div class="btn" style="left:414px;top:525px;width:62px;height:17px"></div>
<div class="t" style="top:527.00px;font-size:9.3px;font-weight:bold;left:428.50px;transform:scaleX(0.9187);"><u>D</u>alší ...</div>
<div class="fld" style="left:674px;top:505px;width:101px;height:16px;background:#e4e4e4"></div>
<div class="t" style="top:508.00px;font-size:9.6px;left:735.97px;width:37.36px;text-align:right;transform:scaleX(0.9054);transform-origin:100% 0;">3 300.00</div>
<div class="fld" style="left:776px;top:505px;width:101px;height:16px;background:#e4e4e4"></div>
<div class="t" style="top:508.00px;font-size:9.6px;left:845.97px;width:29.34px;text-align:right;transform:scaleX(0.9172);transform-origin:100% 0;">693.50</div>
<div class="fld" style="left:878px;top:505px;width:100px;height:16px;background:#e4e4e4"></div>
<div class="t" style="top:508.00px;font-size:9.6px;left:939.57px;width:37.36px;text-align:right;transform:scaleX(0.9054);transform-origin:100% 0;">3 993.50</div>
<div style="left:572px;top:534px;width:407px;height:12px;background:#cdcdcd;border:1px solid #aab6c8;box-sizing:border-box;border-radius:2px"></div>
<svg style="left:572px;top:534px" width="13" height="12" viewBox="0 0 13 12"><path d="M12.5 0.5 L6 0.5 A5.5 5.5 0 0 0 6 11.5 L12.5 11.5 Z" fill="#d3d6dc" stroke="#8e9db5" stroke-width="1"/><path d="M8.5 2.5 L8.5 9.5 L4.5 6 Z" fill="#5f6f88"/></svg>
<svg style="left:966px;top:534px" width="13" height="12" viewBox="0 0 13 12"><path d="M0.5 0.5 L7 0.5 A5.5 5.5 0 0 1 7 11.5 L0.5 11.5 Z" fill="#d3d6dc" stroke="#8e9db5" stroke-width="1"/><path d="M4.5 2.5 L4.5 9.5 L8.5 6 Z" fill="#5f6f88"/></svg>
<div style="left:715px;top:537px;width:2px;height:2px;background:#f2f2f2;border-radius:1px;box-shadow:0.5px 0.5px 0 #a8b0bc"></div>
<div style="left:711px;top:541px;width:2px;height:2px;background:#f2f2f2;border-radius:1px;box-shadow:0.5px 0.5px 0 #a8b0bc"></div>
<div style="left:721px;top:537px;width:2px;height:2px;background:#f2f2f2;border-radius:1px;box-shadow:0.5px 0.5px 0 #a8b0bc"></div>
<div style="left:717px;top:541px;width:2px;height:2px;background:#f2f2f2;border-radius:1px;box-shadow:0.5px 0.5px 0 #a8b0bc"></div>
<div style="left:727px;top:537px;width:2px;height:2px;background:#f2f2f2;border-radius:1px;box-shadow:0.5px 0.5px 0 #a8b0bc"></div>
<div style="left:723px;top:541px;width:2px;height:2px;background:#f2f2f2;border-radius:1px;box-shadow:0.5px 0.5px 0 #a8b0bc"></div>
<div style="left:733px;top:537px;width:2px;height:2px;background:#f2f2f2;border-radius:1px;box-shadow:0.5px 0.5px 0 #a8b0bc"></div>
<div style="left:729px;top:541px;width:2px;height:2px;background:#f2f2f2;border-radius:1px;box-shadow:0.5px 0.5px 0 #a8b0bc"></div>
<div style="left:739px;top:537px;width:2px;height:2px;background:#f2f2f2;border-radius:1px;box-shadow:0.5px 0.5px 0 #a8b0bc"></div>
<div style="left:735px;top:541px;width:2px;height:2px;background:#f2f2f2;border-radius:1px;box-shadow:0.5px 0.5px 0 #a8b0bc"></div>
<div style="left:745px;top:537px;width:2px;height:2px;background:#f2f2f2;border-radius:1px;box-shadow:0.5px 0.5px 0 #a8b0bc"></div>
<div style="left:741px;top:541px;width:2px;height:2px;background:#f2f2f2;border-radius:1px;box-shadow:0.5px 0.5px 0 #a8b0bc"></div>
<div style="left:751px;top:537px;width:2px;height:2px;background:#f2f2f2;border-radius:1px;box-shadow:0.5px 0.5px 0 #a8b0bc"></div>
<div style="left:747px;top:541px;width:2px;height:2px;background:#f2f2f2;border-radius:1px;box-shadow:0.5px 0.5px 0 #a8b0bc"></div>
<div style="left:757px;top:537px;width:2px;height:2px;background:#f2f2f2;border-radius:1px;box-shadow:0.5px 0.5px 0 #a8b0bc"></div>
<div style="left:753px;top:541px;width:2px;height:2px;background:#f2f2f2;border-radius:1px;box-shadow:0.5px 0.5px 0 #a8b0bc"></div>
<div style="left:763px;top:537px;width:2px;height:2px;background:#f2f2f2;border-radius:1px;box-shadow:0.5px 0.5px 0 #a8b0bc"></div>
<div style="left:759px;top:541px;width:2px;height:2px;background:#f2f2f2;border-radius:1px;box-shadow:0.5px 0.5px 0 #a8b0bc"></div>
<div style="left:769px;top:537px;width:2px;height:2px;background:#f2f2f2;border-radius:1px;box-shadow:0.5px 0.5px 0 #a8b0bc"></div>
<div style="left:765px;top:541px;width:2px;height:2px;background:#f2f2f2;border-radius:1px;box-shadow:0.5px 0.5px 0 #a8b0bc"></div>
<div style="left:775px;top:537px;width:2px;height:2px;background:#f2f2f2;border-radius:1px;box-shadow:0.5px 0.5px 0 #a8b0bc"></div>
<div style="left:771px;top:541px;width:2px;height:2px;background:#f2f2f2;border-radius:1px;box-shadow:0.5px 0.5px 0 #a8b0bc"></div>
<div style="left:781px;top:537px;width:2px;height:2px;background:#f2f2f2;border-radius:1px;box-shadow:0.5px 0.5px 0 #a8b0bc"></div>
<div style="left:777px;top:541px;width:2px;height:2px;background:#f2f2f2;border-radius:1px;box-shadow:0.5px 0.5px 0 #a8b0bc"></div>
<div style="left:787px;top:537px;width:2px;height:2px;background:#f2f2f2;border-radius:1px;box-shadow:0.5px 0.5px 0 #a8b0bc"></div>
<div style="left:783px;top:541px;width:2px;height:2px;background:#f2f2f2;border-radius:1px;box-shadow:0.5px 0.5px 0 #a8b0bc"></div>
<div style="left:793px;top:537px;width:2px;height:2px;background:#f2f2f2;border-radius:1px;box-shadow:0.5px 0.5px 0 #a8b0bc"></div>
<div style="left:789px;top:541px;width:2px;height:2px;background:#f2f2f2;border-radius:1px;box-shadow:0.5px 0.5px 0 #a8b0bc"></div>
<div style="left:799px;top:537px;width:2px;height:2px;background:#f2f2f2;border-radius:1px;box-shadow:0.5px 0.5px 0 #a8b0bc"></div>
<div style="left:795px;top:541px;width:2px;height:2px;background:#f2f2f2;border-radius:1px;box-shadow:0.5px 0.5px 0 #a8b0bc"></div>
<div style="left:805px;top:537px;width:2px;height:2px;background:#f2f2f2;border-radius:1px;box-shadow:0.5px 0.5px 0 #a8b0bc"></div>
<div style="left:801px;top:541px;width:2px;height:2px;background:#f2f2f2;border-radius:1px;box-shadow:0.5px 0.5px 0 #a8b0bc"></div>
<div style="left:811px;top:537px;width:2px;height:2px;background:#f2f2f2;border-radius:1px;box-shadow:0.5px 0.5px 0 #a8b0bc"></div>
<div style="left:807px;top:541px;width:2px;height:2px;background:#f2f2f2;border-radius:1px;box-shadow:0.5px 0.5px 0 #a8b0bc"></div>
<div style="left:817px;top:537px;width:2px;height:2px;background:#f2f2f2;border-radius:1px;box-shadow:0.5px 0.5px 0 #a8b0bc"></div>
<div style="left:813px;top:541px;width:2px;height:2px;background:#f2f2f2;border-radius:1px;box-shadow:0.5px 0.5px 0 #a8b0bc"></div>
<div style="left:823px;top:537px;width:2px;height:2px;background:#f2f2f2;border-radius:1px;box-shadow:0.5px 0.5px 0 #a8b0bc"></div>
<div style="left:819px;top:541px;width:2px;height:2px;background:#f2f2f2;border-radius:1px;box-shadow:0.5px 0.5px 0 #a8b0bc"></div>
<div style="left:829px;top:537px;width:2px;height:2px;background:#f2f2f2;border-radius:1px;box-shadow:0.5px 0.5px 0 #a8b0bc"></div>
<div style="left:825px;top:541px;width:2px;height:2px;background:#f2f2f2;border-radius:1px;box-shadow:0.5px 0.5px 0 #a8b0bc"></div>
<div style="left:835px;top:537px;width:2px;height:2px;background:#f2f2f2;border-radius:1px;box-shadow:0.5px 0.5px 0 #a8b0bc"></div>
<div style="left:831px;top:541px;width:2px;height:2px;background:#f2f2f2;border-radius:1px;box-shadow:0.5px 0.5px 0 #a8b0bc"></div>
<div style="left:841px;top:537px;width:2px;height:2px;background:#f2f2f2;border-radius:1px;box-shadow:0.5px 0.5px 0 #a8b0bc"></div>
<div style="left:837px;top:541px;width:2px;height:2px;background:#f2f2f2;border-radius:1px;box-shadow:0.5px 0.5px 0 #a8b0bc"></div>
<div class="ibtn" style="left:9px;top:65px"></div>
<div class="ibtn" style="left:9px;top:95px"></div>
<div class="ibtn" style="left:9px;top:125px"></div>
<div class="ibtn" style="left:9px;top:155px"></div>
<div class="ibtn" style="left:9px;top:184px"></div>
<div class="ibtn" style="left:9px;top:214px"></div>
<svg style="left:9px;top:65px" width="28" height="28" viewBox="0 0 28 28">
 <path d="M6 17.5 L14 7.5 L25 12.5 L13.5 23.5 Z" fill="#fafafa" stroke="#151515" stroke-width="1.2" stroke-linejoin="round"/>
 <path d="M6 17.5 L6.2 19.3 L13.6 25.4 L25.2 14.3 L25 12.5 L13.5 23.5 Z" fill="#555" stroke="#151515" stroke-width="0.9" stroke-linejoin="round"/>
 <path d="M10.5 16.5 L15 11.5 M13 18.5 L17.5 13.5 M15.5 20 L20 15" stroke="#9a9a9a" stroke-width="0.8"/>
 <path d="M3.5 12 C2.5 10 4.5 8 6.5 8.2 L10.5 7.5 L13 11.5 L10.5 14.2 C8.5 15.2 5 14.5 3.5 12 Z" fill="#fafafa" stroke="#151515" stroke-width="1.2"/>
 <path d="M3.3 2.2 L11.8 10.5" stroke="#151515" stroke-width="2"/>
 <path d="M8.5 9.5 L12 12" stroke="#151515" stroke-width="1"/>
</svg>
<div class="t" style="top:97.00px;font-size:15px;color:#000;left:10.69px;transform:scaleX(0.9053);-webkit-text-stroke:0">RP</div>
<svg style="left:23.5px;top:109px" width="12" height="11.5" viewBox="0 0 12 11.5"><rect width="12" height="5.75" fill="#fff"/><rect y="5.75" width="12" height="5.75" fill="#ee1c25"/><path d="M0 0 L6 5.75 L0 11.5 Z" fill="#2a4cc8"/></svg>
<div class="t" style="top:127.00px;font-size:15px;color:#000;left:10.69px;transform:scaleX(0.9053);-webkit-text-stroke:0">RP</div>
<svg style="left:23.5px;top:139.5px" width="12" height="11" viewBox="0 0 12 11"><rect width="12" height="11" fill="#3048d0"/><g fill="#e0cc40"><circle cx="6" cy="1.6" r="0.7"/><circle cx="8.7" cy="2.4" r="0.7"/><circle cx="10" cy="5.5" r="0.7"/><circle cx="8.7" cy="8.4" r="0.7"/><circle cx="6" cy="9.4" r="0.7"/><circle cx="3.3" cy="8.4" r="0.7"/><circle cx="2" cy="5.5" r="0.7"/><circle cx="3.3" cy="2.4" r="0.7"/></g></svg>
<div class="t" style="left:11px;top:154.5px;font-family:&quot;Liberation Serif&quot;,serif;font-size:15px;line-height:16px;color:#000;-webkit-text-stroke:0.1px #000;transform:scaleX(1.05)">IR</div>
<svg style="left:23.5px;top:169px" width="12" height="11.5" viewBox="0 0 12 11.5"><rect width="12" height="5.75" fill="#fff"/><rect y="5.75" width="12" height="5.75" fill="#ee1c25"/><path d="M0 0 L6 5.75 L0 11.5 Z" fill="#2828e0"/></svg>
<svg style="left:9px;top:184px" width="28" height="18" viewBox="0 0 28 18">
 <path d="M2 10 C4 8 9 7.5 14 7.5 L25 3 L13 16 Z" fill="#f2f2f2" stroke="#8a8a8a" stroke-width="0.7"/>
 <path d="M25 3 L13 16 L11.5 10.5 Z" fill="#ffffff" stroke="#777" stroke-width="0.7"/>
 <path d="M14 7.5 L25 3 L11.5 10.5 Z" fill="#b8b8b8"/>
 <path d="M7 10.5 L8.5 17" stroke="#333" stroke-width="1.3"/>
 <path d="M11.5 10.5 L13 16" stroke="#444" stroke-width="1"/>
 <path d="M2 10 L11.5 10.5" stroke="#999" stroke-width="0.8"/>
</svg>
<div class="t" style="top:200.00px;font-size:8px;font-weight:bold;color:#2a30c0;left:15.30px;transform:scaleX(0.8235);-webkit-text-stroke:0.1px currentColor">SPG</div>
<svg style="left:13px;top:215px" width="20" height="19" viewBox="0 0 20 19">
 <rect x="1.5" y="1" width="17" height="16.5" fill="#fff"/>
 <rect x="17" y="0.5" width="1.8" height="17.5" fill="#000"/>
 <path d="M8 4.5 L15.5 4.5 M8 9.5 L15.5 9.5 M8 14.5 L15.5 14.5" stroke="#222" stroke-width="1"/>
 <path d="M3 4 L5 6.5 L9 1.5" stroke="#e8101a" stroke-width="1.8" fill="none"/>
 <path d="M3 14 L5 16.5 L9 11.5" stroke="#e8101a" stroke-width="1.8" fill="none"/>
 <path d="M3.5 5.5 L5 7.5 M3.5 15.5 L5 17.5" stroke="#333" stroke-width="0.8"/>
 <rect x="3.2" y="8" width="4.5" height="3" rx="1" fill="#eee" stroke="#222" stroke-width="1"/>
</svg>
<div class="t" style="top:230.00px;font-size:6.5px;font-weight:bold;color:#000;left:12.30px;transform:scaleX(0.9818);-webkit-text-stroke:0.35px #000">ÚKOLY</div>
</body></html>
